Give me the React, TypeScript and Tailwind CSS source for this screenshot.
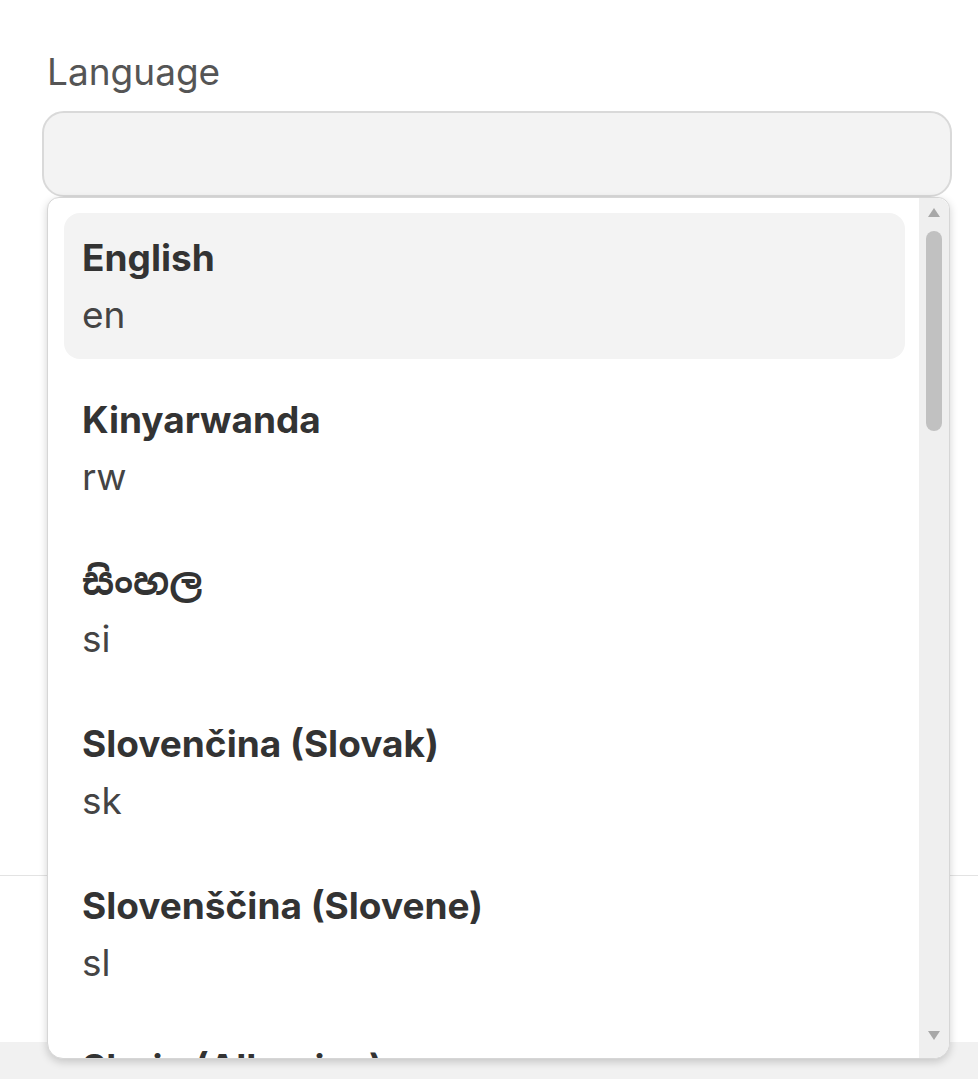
import React from "react";

const languages = [
  { name: "English", code: "en" },
  { name: "Kinyarwanda", code: "rw" },
  { name: "සිංහල", code: "si" },
  { name: "Slovenčina (Slovak)", code: "sk" },
  { name: "Slovenščina (Slovene)", code: "sl" },
  { name: "Shqip (Albanian)", code: "sq" },
];

export default function App() {
  return (
    <div className="relative flex h-[1079px] w-[978px] flex-col overflow-hidden bg-white font-['Inter','Noto_Sans_Sinhala','Noto_Sans',sans-serif]">
      {/* Form field */}
      <div className="h-[875px] pl-[42px] pr-[26px] pt-[52px]">
        <label className="block pl-[5px] text-[37px] leading-[40px] text-[#555555]">
          Language
        </label>
        <div className="mt-[19px] h-[86px] w-[910px] rounded-[22px] border-2 border-[#d9d9d9] bg-[#f3f3f3]" />
      </div>

      {/* Divider + footer */}
      <div className="h-[167px] border-t border-[#e3e3e3] bg-white" />
      <div className="flex-1 bg-[#f1f1f1]" />

      {/* Dropdown menu */}
      <div className="absolute left-[47px] top-[197px] flex h-[862px] w-[903px] overflow-hidden rounded-b-[16px] rounded-t-[12px] border border-[#d6d6d6] bg-white shadow-[0_3px_8px_rgba(0,0,0,0.18)]">
        <ul className="flex flex-1 flex-col gap-[16px] overflow-hidden py-[15px] pl-[16px] pr-[14px]">
          {languages.map((lang, i) => (
            <li
              key={lang.code}
              className={
                i === 0
                  ? "shrink-0 rounded-[16px] bg-[#f3f3f3] px-[18px] pb-[23px] pt-[24px]"
                  : "shrink-0 rounded-[16px] px-[18px] pb-[23px] pt-[24px]"
              }
            >
              <div className="whitespace-nowrap text-[37px] font-bold leading-[42px] text-[#333333]">
                {lang.name}
              </div>
              <div className="mt-[15px] text-[37px] leading-[42px] text-[#444444]">
                {lang.code}
              </div>
            </li>
          ))}
        </ul>

        {/* Scrollbar */}
        <div className="flex w-[30px] shrink-0 flex-col items-center rounded-tr-[12px] bg-[#efefef] py-[8px]">
          <svg width="16" height="12" viewBox="0 0 16 12" className="shrink-0">
            <path d="M8 2 L14 11 L2 11 Z" fill="#a8a8a8" />
          </svg>
          <div className="mt-[13px] h-[200px] w-[16px] rounded-full bg-[#c1c1c1]" />
          <div className="flex-1" />
          <svg width="16" height="12" viewBox="0 0 16 12" className="mb-[8px] shrink-0">
            <path d="M2 1 L14 1 L8 10 Z" fill="#a8a8a8" />
          </svg>
        </div>
      </div>
    </div>
  );
}
